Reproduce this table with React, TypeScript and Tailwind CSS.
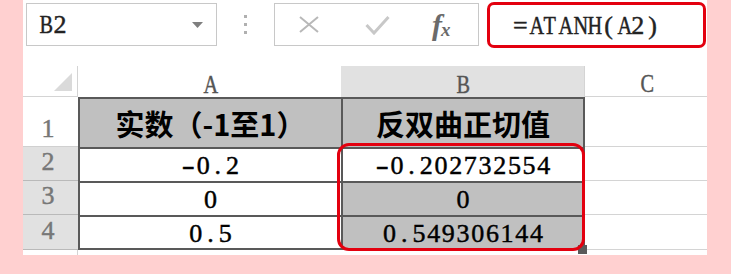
import React from "react";

// SimSun-like half-width text: every character on a fixed 14.7px pitch
function Mono({ text, className = "" }: { text: string; className?: string }) {
  return (
    <span
      className={`inline-flex font-['Liberation_Serif',serif] text-[26px] leading-none [-webkit-text-stroke:0.45px_currentColor] ${className}`}
    >
      {text.split("").map((c, i) => (
        <span
          key={i}
          className={`inline-block w-[14.7px] text-center ${
            /[A-Z]/.test(c) ? "scale-x-[0.78]" : c === "-" ? "scale-x-[1.5]" : ""
          }`}
        >
          {c}
        </span>
      ))}
    </span>
  );
}

const cjk = "font-['Noto_Sans_CJK_SC',sans-serif] text-[29px] font-bold leading-none text-black";

const dataRows = [
  { n: "2", a: "-0.2", b: "-0.202732554", shaded: false, h: "h-[34px]" },
  { n: "3", a: "0", b: "0", shaded: true, h: "h-[34px]" },
  { n: "4", a: "0.5", b: "0.549306144", shaded: true, h: "h-[35px]" },
];

function FormulaBar() {
  return (
    <div className="h-[49px] flex items-center">
      {/* Name box */}
      <div className="ml-[3px] w-[191px] h-[43px] border border-[#c8c8c8] flex items-center justify-between pl-[11px] pr-[13px]">
        <Mono text="B2" className="text-[#222]" />
        <svg width="11" height="6" viewBox="0 0 11 6">
          <polygon points="0,0 11,0 5.5,6" fill="#7f7f7f" />
        </svg>
      </div>

      {/* Grip dots */}
      <div className="w-[57px] flex flex-col items-center gap-[5px]">
        <div className="w-[3px] h-[3px] bg-[#b0b0b0]" />
        <div className="w-[3px] h-[3px] bg-[#b0b0b0]" />
        <div className="w-[3px] h-[3px] bg-[#b0b0b0]" />
      </div>

      {/* Cancel / enter / fx */}
      <div className="w-[205px] h-[43px] border border-[#c8c8c8] flex items-center pl-[24px]">
        <svg width="20" height="17" viewBox="0 0 20 17">
          <path d="M1 1 L19 16 M19 1 L1 16" stroke="#b8b8b8" strokeWidth="2" fill="none" />
        </svg>
        <svg width="25" height="20" viewBox="0 0 25 20" className="ml-[46px]">
          <path d="M1.5 10 L9 18 L23.5 2" stroke="#c8c8c8" strokeWidth="3" fill="none" />
        </svg>
        <span className="ml-[42px] font-['Liberation_Serif',serif] italic font-bold text-[#6b6b6b] leading-none flex items-end">
          <span className="text-[30px]">f</span>
          <span className="text-[19px] -ml-[1px] mb-[1px]">x</span>
        </span>
      </div>

      {/* Formula input */}
      <div className="ml-[8px] w-[219px] h-[46px] border-[3px] border-[#e3000f] rounded-[7px] flex items-center pl-[23px] pt-[3px]">
        <Mono text="=ATANH(A2)" className="text-[#222]" />
      </div>
    </div>
  );
}

function ColumnHeaders() {
  return (
    <div className="flex h-[31px] mt-[17px]">
      <div className="w-[55px] border-r border-b border-[#d4d4d4] flex items-end justify-end pr-[5px] pb-[5px]">
        <svg width="18" height="18" viewBox="0 0 18 18">
          <polygon points="18,0 18,18 0,18" fill="#dadada" />
        </svg>
      </div>
      <div className="w-[263px] flex items-center justify-center pt-[6px] text-[#555]">
        <Mono text="A" />
      </div>
      <div className="w-[244px] bg-[#e1e1e1] border-r border-[#d4d4d4] flex items-center justify-center pt-[6px] text-[#555]">
        <Mono text="B" />
      </div>
      <div className="flex-1 border-b border-[#d4d4d4] flex items-center justify-center pt-[6px] text-[#555]">
        <Mono text="C" />
      </div>
    </div>
  );
}

export default function App() {
  return (
    <div className="w-[731px] h-[274px] bg-[#ffd0d0] pl-[23px] overflow-hidden">
      <div className="relative w-[684px] h-[255px] bg-white flex flex-col">
        <FormulaBar />
        <ColumnHeaders />

        {/* Row 1 — headings */}
        <div className="flex h-[50px]">
          <div className="w-[55px] border-b border-[#d0d0d0] flex items-end justify-center pr-[5px] pb-[4px] text-[#777]">
            <Mono text="1" />
          </div>
          <div className="w-[263px] bg-[#c0c0c0] border-l-2 border-t-2 border-[#595959] flex items-center justify-center">
            <span className={cjk}>实数（-1至1）</span>
          </div>
          <div className="w-[244px] bg-[#c0c0c0] border-x-2 border-t-2 border-[#595959] flex items-center justify-center">
            <span className={cjk}>反双曲正切值</span>
          </div>
          <div className="flex-1 border-b border-[#d4d4d4]" />
        </div>

        {dataRows.map((r, i) => {
          const last = i === dataRows.length - 1;
          return (
            <div key={r.n} className={`flex ${r.h}`}>
              <div className="w-[55px] bg-[#e1e1e1] border-b border-[#b9b9b9] flex items-end justify-center pr-[5px] pb-[5px] text-[#777]">
                <Mono text={r.n} />
              </div>
              <div
                className={`w-[263px] bg-white border-l-2 border-t-2 border-[#595959] flex items-center justify-center pt-[2px] text-black ${
                  last ? "border-b-2" : ""
                }`}
              >
                <Mono text={r.a} />
              </div>
              <div
                className={`w-[244px] border-x-2 border-t-2 border-[#595959] flex items-center justify-center pt-[2px] text-black ${
                  r.shaded ? "bg-[#c0c0c0]" : "bg-white"
                } ${last ? "border-b-2" : ""}`}
              >
                <Mono text={r.b} />
              </div>
              <div className="flex-1 border-b border-[#d4d4d4]" />
            </div>
          );
        })}

        {/* trailing strip */}
        <div className="flex flex-1">
          <div className="w-[55px] border-r border-[#d4d4d4]" />
        </div>

        {/* fill handle + red highlight over B2:B4 */}
        <div className="absolute left-[555px] top-[245px] w-[9px] h-[9px] bg-[#5a5a5a]" />
        <div className="absolute left-[314px] top-[143px] w-[248px] h-[108px] border-[3px] border-[#e3000f] rounded-[12px]" />
      </div>
    </div>
  );
}
